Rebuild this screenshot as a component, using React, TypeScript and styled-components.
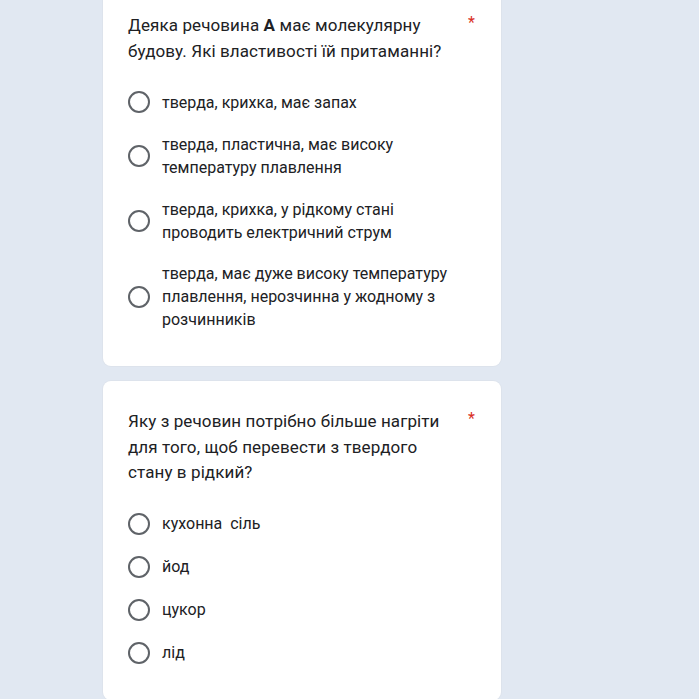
import styled, { createGlobalStyle } from 'styled-components';

const GlobalStyle = createGlobalStyle`
  html, body {
    margin: 0;
    padding: 0;
    background: #e1e8f2;
    font-family: Roboto, 'Noto Sans', Arial, sans-serif;
    color: #202124;
  }
`;

const Page = styled.div`
  width: 699px;
  height: 699px;
  overflow: hidden;
`;

const Column = styled.div`
  display: flex;
  flex-direction: column;
  gap: 15px;
  margin: -15px 0 0 103px;
  width: 398px;
`;

const Card = styled.div`
  background: #ffffff;
  border-radius: 8px;
  padding: 28px 25px 35px 25px;
  box-shadow: 0 0 0 1px #dde3ec;
`;

const TitleRow = styled.div`
  display: flex;
  align-items: flex-start;
  justify-content: space-between;
  margin-bottom: 26px;
`;

const Title = styled.div`
  font-size: 17px;
  line-height: 25.5px;
  letter-spacing: 0.1px;
  max-width: 330px;

  b {
    font-weight: 700;
  }
`;

const Required = styled.span`
  color: #d93025;
  font-size: 16px;
  line-height: 20px;
  margin-right: 1px;
`;

const Options = styled.div`
  display: flex;
  flex-direction: column;
  gap: 18.5px;
`;

const Option = styled.label`
  display: flex;
  align-items: center;
  gap: 12px;
  min-height: 24.5px;
`;

const Radio = styled.span`
  flex: none;
  width: 18px;
  height: 18px;
  border: 2px solid #5f6368;
  border-radius: 50%;
`;

const OptionText = styled.span`
  font-size: 16px;
  line-height: 23px;
  max-width: 310px;
  white-space: pre-wrap;
`;

const questions = [
  {
    title: (
      <>
        Деяка речовина <b>А</b> має молекулярну будову. Які властивості їй притаманні?
      </>
    ),
    options: [
      'тверда, крихка, має запах',
      'тверда, пластична, має високу температуру плавлення',
      'тверда, крихка, у рідкому стані проводить електричний струм',
      'тверда, має дуже високу температуру плавлення, нерозчинна у жодному з розчинників',
    ],
  },
  {
    title: <>Яку з речовин потрібно більше нагріти для того, щоб перевести з твердого стану в рідкий?</>,
    options: ['кухонна  сіль', 'йод', 'цукор', 'лід'],
  },
];

function App() {
  return (
    <>
      <GlobalStyle />
      <Page>
        <Column>
          {questions.map((q, i) => (
            <Card key={i}>
              <TitleRow>
                <Title>{q.title}</Title>
                <Required>*</Required>
              </TitleRow>
              <Options>
                {q.options.map((o) => (
                  <Option key={o}>
                    <Radio />
                    <OptionText>{o}</OptionText>
                  </Option>
                ))}
              </Options>
            </Card>
          ))}
        </Column>
      </Page>
    </>
  );
}

export default App;
